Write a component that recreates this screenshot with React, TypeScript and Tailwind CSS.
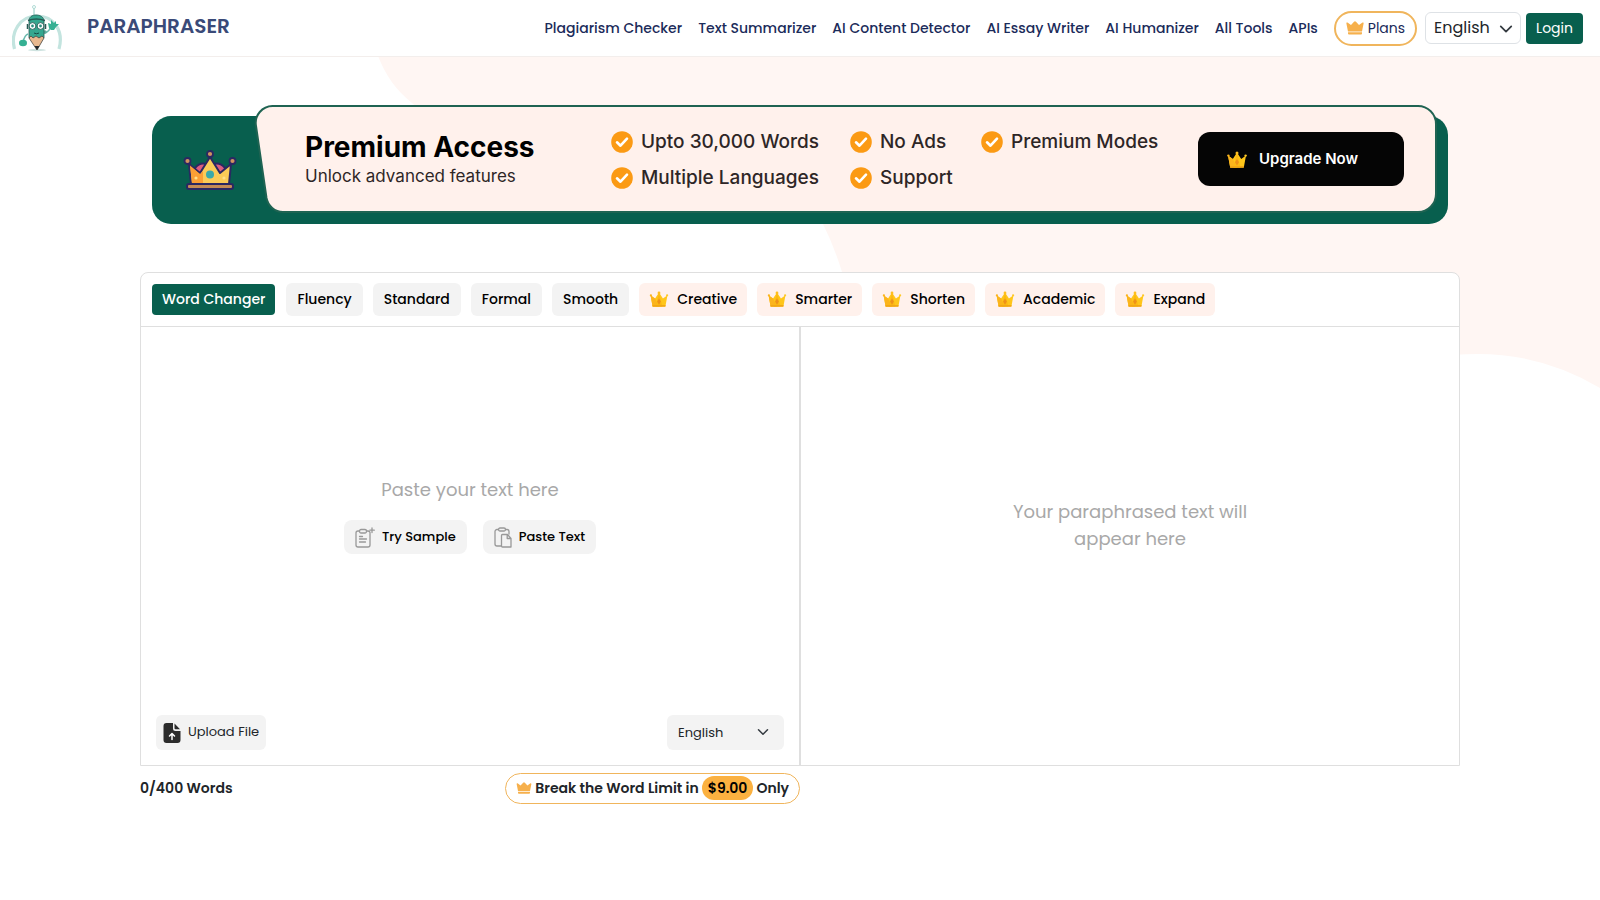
import { useState } from 'react';

const navLinks = [
  'Plagiarism Checker',
  'Text Summarizer',
  'AI Content Detector',
  'AI Essay Writer',
  'AI Humanizer',
  'All Tools',
  'APIs',
];

const modes = [
  { name: 'Word Changer', premium: false },
  { name: 'Fluency', premium: false },
  { name: 'Standard', premium: false },
  { name: 'Formal', premium: false },
  { name: 'Smooth', premium: false },
  { name: 'Creative', premium: true },
  { name: 'Smarter', premium: true },
  { name: 'Shorten', premium: true },
  { name: 'Academic', premium: true },
  { name: 'Expand', premium: true },
];

const features = [
  'Upto 30,000 Words',
  'No Ads',
  'Premium Modes',
  'Multiple Languages',
  'Support',
];

function Logo() {
  return (
    <svg viewBox="0 0 52 48" className="w-13 h-12" aria-hidden="true">
      <path d="M2.500 45C-2 28 8 12 25 12s27 15 22 33" fill="none" stroke="#c3e4df" strokeWidth="3.200" />
      <ellipse cx="25" cy="46" rx="9" ry="1.2" fill="#cfe3e0" />
      <path d="M22 12V4" stroke="#8cc9c0" strokeWidth="1" />
      <circle cx="22" cy="3" r="1.5" fill="#fff" stroke="#9fd3cb" strokeWidth="0.8" />
      <path d="M16 30c-3 1-4 4-5 8M32 29c4 0 5-3 7-6" fill="none" stroke="#6bb9ae" strokeWidth="1.5" />
      <circle cx="33" cy="28" r="1.8" fill="#5fae9f" />
      <ellipse cx="11" cy="39" rx="4" ry="3.2" fill="#35b093" />
      <path d="M37 24l-1-5 3 1 0-4 3 3 2-2 0 3 3 0-3 3-2 3-3 0z" fill="#35b093" />
      <path d="M17 17c0-4 3-6 7-6s8 2 8 6v17H17z" fill="#35a78f" stroke="#265a54" strokeWidth="0.8" />
      <path d="M16 16.500q8-3 17 0" fill="none" stroke="#265a54" strokeWidth="1.500" />
      <path d="M17 34l8 12 7-12-2-2-3 2-3-2-3 2-2-2z" fill="#e8b88f" stroke="#4b4a44" strokeWidth="0.8" />
      <path d="M22.500 42l2.500 4 2.500-4z" fill="#22262a" />
      <path d="M15.500 20v5M33.500 20v5" stroke="#265a54" strokeWidth="1.500" />
      <circle cx="20.500" cy="22" r="3.400" fill="#fff" stroke="#235651" strokeWidth="0.900" />
      <circle cx="28.500" cy="22" r="3.400" fill="#fff" stroke="#235651" strokeWidth="0.900" />
      <circle cx="20.500" cy="22" r="1.400" fill="#2b8f80" />
      <circle cx="28.500" cy="22" r="1.400" fill="#2b8f80" />
      <path d="M22 29q2.500 1.600 5 0" fill="none" stroke="#184a44" strokeWidth="1" />
    </svg>
  );
}

function FlatCrown({ className }: { className: string }) {
  return (
    <svg viewBox="0 0 18 14" className={className} fill="#f6b04c" aria-hidden="true">
      <path d="M1.500 1.500L5 4 8 .8a1.300 1.300 0 0 1 2 0L13 4l3.500-2.500a.8.8 0 0 1 1.100.9L16 10.500H2L.400 2.400a.8.8 0 0 1 1.100-.9z" />
      <path d="M2 11.300h14v1.300a1 1 0 0 1-1 1H3a1 1 0 0 1-1-1z" />
    </svg>
  );
}

function GoldCrown({ className }: { className: string }) {
  return (
    <svg viewBox="0 0 20 17" className={className} aria-hidden="true">
      <path d="M1 4.500l4.800 3.500L10 1.500 14.200 8 19 4.500 16.800 16.500H3.200z" fill="#ffc61a" />
      <path d="M1 4.500l4.800 3.500L10 16.500H3.200z" fill="#fbb41c" />
      <path d="M10 1.500L13.500 16.500h-7z" fill="#fcb813" />
      <path d="M10 8l2 3.200-2 3.300-2-3.300z" fill="#ee9118" />
      <path d="M3 15h14l-.3 1.700H3.300z" fill="#f2a715" />
      <circle cx="10" cy="2" r="1.500" fill="#ffbf1f" />
      <circle cx="1.400" cy="4.600" r="1.200" fill="#fbb41c" />
      <circle cx="18.600" cy="4.600" r="1.200" fill="#ffc928" />
    </svg>
  );
}

function RoyalCrown() {
  return (
    <svg viewBox="0 0 54 42" className="w-[54px] h-[42px]" aria-hidden="true">
      <path d="M12 19q5-6 11-4l3 12H11zM42 19q-5-6-11-4l-3 12h16z" fill="#dc5c80" stroke="#2b2862" strokeWidth="2" />
      <path d="M6 15l11 9L27 8l10 16 11-9-2 20H8z" fill="#fbcb57" stroke="#2b2862" strokeWidth="2" strokeLinejoin="round" />
      <path d="M7 16.500l10 8.500 3-3v12H9z" fill="#fb9f35" />
      <circle cx="27" cy="25.500" r="4" fill="#3aa9ab" />
      <circle cx="13" cy="29" r="1.600" fill="#ffe08a" />
      <circle cx="41" cy="29" r="1.600" fill="#ffe08a" />
      <rect x="4" y="35" width="46" height="5" rx="2" fill="#c48a55" stroke="#2b2862" strokeWidth="2" />
      <circle cx="27" cy="5" r="3" fill="#d0935f" stroke="#2b2862" strokeWidth="1.800" />
      <circle cx="4.500" cy="12" r="3" fill="#d0935f" stroke="#2b2862" strokeWidth="1.800" />
      <circle cx="49.500" cy="12" r="3" fill="#d0935f" stroke="#2b2862" strokeWidth="1.800" />
    </svg>
  );
}

function Chevron({ className }: { className: string }) {
  return (
    <svg viewBox="0 0 16 16" className={className} fill="none" stroke="#343a40" strokeWidth="2" strokeLinecap="round" strokeLinejoin="round" aria-hidden="true">
      <path d="m2 5 6 6 6-6" />
    </svg>
  );
}

function CheckBadge() {
  return (
    <svg viewBox="0 0 22 22" className="size-[22px] shrink-0" aria-hidden="true">
      <circle cx="11" cy="11" r="10.800" fill="#fb9a14" />
      <path d="M6 11.300l3.500 3.400 6.500-7" fill="none" stroke="#fff" strokeWidth="2.600" strokeLinecap="round" strokeLinejoin="round" />
    </svg>
  );
}

function SampleIcon() {
  return (
    <svg viewBox="0 0 20 21" className="w-5 h-[21px]" fill="none" stroke="#999" strokeWidth="1.300" strokeLinecap="round" strokeLinejoin="round" aria-hidden="true">
      <path d="M4.500 4H3a2 2 0 0 0-2 2v12a2 2 0 0 0 2 2h10a2 2 0 0 0 2-2V6.500a2 2 0 0 0-2-2.500h-1.500" />
      <rect x="4.500" y="2.500" width="7" height="3.500" rx="1.500" />
      <path d="M4.500 9.500h3M4.500 12h7M4.500 15h6M17 1v4.500M14.800 3.200h4.500" />
    </svg>
  );
}

function PasteIcon() {
  return (
    <svg viewBox="0 0 18 21" className="w-[18px] h-[21px]" fill="none" stroke="#999" strokeWidth="1.300" strokeLinecap="round" strokeLinejoin="round" aria-hidden="true">
      <path d="M4.500 2.500H3a2 2 0 0 0-2 2V17a2 2 0 0 0 2 2h4M11.500 2.500H13a2 2 0 0 1 2 2V7" />
      <rect x="4.500" y="1" width="7" height="3" rx="1.500" />
      <path d="M8.500 7.500h5l3.500 4V20H8.500a1 1 0 0 1-1-1V8.500a1 1 0 0 1 1-1zM13.200 7.500v4H17" />
    </svg>
  );
}

function UploadIcon() {
  return (
    <svg viewBox="0 0 18 20" className="w-[18px] h-5" aria-hidden="true">
      <path d="M3.500 0H10v5.500a2.500 2.500 0 0 0 2.500 2.500H17.500V17a3 3 0 0 1-3 3h-11a3 3 0 0 1-3-3V3a3 3 0 0 1 3-3z" fill="#2c2c2c" />
      <path d="M11.500.5l5.500 5.800h-4.500a1 1 0 0 1-1-1z" fill="#2c2c2c" />
      <path d="M9 16.500v-5.500M6.500 13L9 10.500l2.500 2.500" fill="none" stroke="#fff" strokeWidth="1.500" strokeLinecap="round" strokeLinejoin="round" />
    </svg>
  );
}

function Header() {
  return (
    <header className="relative flex items-center h-[57px] pl-3 pr-[17px] bg-white border-b border-[#f3eeec]">
      <a href="#" className="flex items-center gap-[23px]">
        <Logo />
        <span className="pb-1 text-xl font-semibold text-[#3a4a78]">PARAPHRASER</span>
      </a>
      <nav className="flex items-center gap-4 ml-auto text-sm font-medium text-[#1b2b5a]">
        {navLinks.map((link) => (
          <a key={link} href="#" className="whitespace-nowrap">
            {link}
          </a>
        ))}
        <a href="#" className="flex items-center gap-1 h-[35px] px-2.5 border-2 border-[#f0b55c] rounded-full font-normal">
          <FlatCrown className="w-[18px] h-3.5" />
          Plans
        </a>
      </nav>
      <div className="relative ml-2">
        <select aria-label="Site language" className="appearance-none w-24 h-8 pl-2 pb-px border border-[#dee2e6] rounded-md bg-white text-base text-[#212529]">
          <option>English</option>
        </select>
        <Chevron className="absolute right-2 top-2.5 size-3.5 pointer-events-none" />
      </div>
      <button className="h-[31px] px-2.5 ml-[5px] rounded bg-[#085f4e] text-sm text-white">Login</button>
    </header>
  );
}

function Banner() {
  return (
    <section className="relative flex items-start h-[119px] mx-3 font-['Inter',sans-serif]">
      <svg viewBox="0 0 1296 119" preserveAspectRatio="none" className="absolute inset-0 size-full" aria-hidden="true">
        <rect y="11" width="1296" height="108" rx="19" fill="#085f4e" />
        <path
          d="M121 1H1266a18 18 0 0 1 18 18V89a18 18 0 0 1-18 18H131a17 17 0 0 1-16.500-14L104 21A17 17 0 0 1 121 1z"
          fill="#fff1ec"
          stroke="#1f6352"
          strokeWidth="2"
        />
      </svg>
      <div className="relative w-[153px] pl-[31px] pt-11">
        <RoyalCrown />
      </div>
      <div className="relative pt-6">
        <h2 className="text-[28px] leading-9 font-bold text-black">Premium Access</h2>
        <p className="text-[17px] leading-[22px] text-[#2e2626]">Unlock advanced features</p>
      </div>
      <ul className="absolute left-[459px] top-[25px] grid grid-cols-[239px_131px_auto] gap-y-3 text-[19px] leading-6 font-medium text-[#2e2626]">
        {features.map((feature) => (
          <li key={feature} className="flex items-center gap-2 whitespace-nowrap">
            <CheckBadge />
            {feature}
          </li>
        ))}
      </ul>
      <button className="relative flex items-center gap-3 w-[206px] h-[54px] pl-[29px] mt-[27px] ml-auto mr-11 rounded-xl bg-[#050505] text-[15px] font-semibold text-white">
        <GoldCrown className="w-5 h-[17px]" />
        Upgrade Now
      </button>
    </section>
  );
}

function Editor() {
  const [mode, setMode] = useState('Word Changer');
  const [text, setText] = useState('');
  const words = text.trim() ? text.trim().split(/\s+/).length : 0;

  return (
    <section className="mt-12">
      <div className="border border-[#dfdfdf] rounded-t-lg bg-white">
        <div className="flex items-center gap-2.5 h-[54px] px-[11px] border-b border-[#dfdfdf] text-sm font-medium">
          {modes.map(({ name, premium }) => (
            <button
              key={name}
              onClick={() => setMode(name)}
              className={
                name === mode
                  ? 'h-[31px] px-2.5 pb-0.5 mr-px rounded bg-[#085f4e] text-white'
                  : premium
                    ? 'flex items-center gap-2 h-[33px] px-2.5 pb-0.5 rounded-md bg-[#fff1ec] text-black'
                    : 'h-[33px] px-[11px] pb-0.5 rounded-md bg-[#f3f3f3] text-black'
              }
            >
              {premium && <GoldCrown className="w-5 h-4" />}
              {name}
            </button>
          ))}
        </div>
        <div className="flex min-h-[438px]">
          <div className="flex flex-col w-1/2 pb-[15px] border-r border-[#dfdfdf]">
            <textarea
              aria-label="Your text"
              value={text}
              onChange={(e) => setText(e.target.value)}
              placeholder="Paste your text here"
              className="block h-[193px] pt-[149px] px-4 text-lg leading-[27px] text-center text-gray-800 placeholder:text-[#a8a8a8] resize-none outline-none"
            />
            <div className="flex justify-center gap-4 text-[13px] font-medium text-black">
              <button className="flex items-center gap-[7px] h-[34px] px-[11px] rounded-lg bg-[#f3f3f3]">
                <SampleIcon />
                Try Sample
              </button>
              <button className="flex items-center gap-[7px] h-[34px] px-[11px] rounded-lg bg-[#f3f3f3]">
                <PasteIcon />
                Paste Text
              </button>
            </div>
            <div className="flex justify-between mt-auto px-[15px] text-[13px] text-[#212529]">
              <button className="flex items-center gap-[7px] h-[35px] px-[7px] rounded-md bg-[#f3f3f3]">
                <UploadIcon />
                <span className="pb-0.5">Upload File</span>
              </button>
              <div className="relative">
                <select aria-label="Text language" className="appearance-none w-[117px] h-[35px] pl-[11px] rounded-md bg-[#f3f3f3]">
                  <option>English</option>
                </select>
                <Chevron className="absolute right-[15px] top-[11px] size-3 pointer-events-none" />
              </div>
            </div>
          </div>
          <div className="flex items-center justify-center w-1/2 pb-[42px] border-l border-[#dfdfdf]">
            <p className="w-64 text-lg leading-[27px] text-center text-[#a8a8a8]">
              Your paraphrased text will appear here
            </p>
          </div>
        </div>
      </div>
      <div className="flex items-center justify-between w-1/2 mt-[7px] text-sm font-semibold text-[#212529]">
        <span className="pb-0.5">{words}/400 Words</span>
        <a href="#" className="flex items-center gap-[3px] h-[31px] px-2.5 pb-px border border-[#f0b55c] rounded-full bg-white">
          <FlatCrown className="w-4 h-3" />
          Break the Word Limit in
          <span className="px-1.5 py-0.5 rounded-full bg-[#fbb140] text-black">$9.00</span>
          Only
        </a>
      </div>
    </section>
  );
}

export default function App() {
  return (
    <div className="relative min-h-screen overflow-hidden bg-white font-['Poppins','Inter',sans-serif]">
      {/* soft blob behind the page */}
      <svg viewBox="0 0 1222 340" className="absolute right-0 top-14 w-[1222px] h-[340px]" aria-hidden="true">
        <path
          d="M0 0C8 20 18 34 34 47C80 90 150 100 240 96C340 92 410 120 445 168Q456 190 464 216C490 300 560 330 700 335C900 340 1000 298 1100 298Q1165 298 1222 332V0z"
          fill="#fff6f3"
        />
      </svg>
      <Header />
      <main className="relative w-full max-w-[1320px] mx-auto pt-12">
        <Banner />
        <Editor />
      </main>
    </div>
  );
}
